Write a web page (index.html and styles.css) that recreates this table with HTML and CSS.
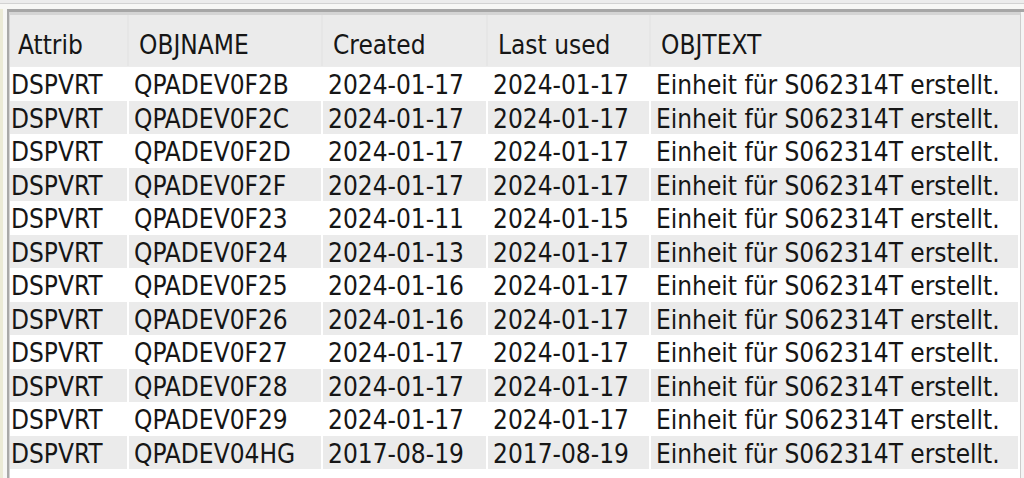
FILE: index.html
```html
<!DOCTYPE html>
<html>
<head>
  <meta charset="utf-8">
  <link rel="stylesheet" href="styles.css">
</head>
<body>
  <div class="top-strip"></div>
  <div class="main">
    <div class="side"></div>
    <div class="panel">
      <div class="list">
        <div class="row header">
          <div class="cell">Attrib</div>
          <div class="cell">OBJNAME</div>
          <div class="cell">Created</div>
          <div class="cell">Last used</div>
          <div class="cell">OBJTEXT</div>
        </div>

        <div class="row">
          <div class="cell">DSPVRT</div><div class="cell">QPADEV0F2B</div><div class="cell">2024-01-17</div><div class="cell">2024-01-17</div><div class="cell">Einheit für S062314T erstellt.</div>
        </div>
        <div class="row">
          <div class="cell">DSPVRT</div><div class="cell">QPADEV0F2C</div><div class="cell">2024-01-17</div><div class="cell">2024-01-17</div><div class="cell">Einheit für S062314T erstellt.</div>
        </div>
        <div class="row">
          <div class="cell">DSPVRT</div><div class="cell">QPADEV0F2D</div><div class="cell">2024-01-17</div><div class="cell">2024-01-17</div><div class="cell">Einheit für S062314T erstellt.</div>
        </div>
        <div class="row">
          <div class="cell">DSPVRT</div><div class="cell">QPADEV0F2F</div><div class="cell">2024-01-17</div><div class="cell">2024-01-17</div><div class="cell">Einheit für S062314T erstellt.</div>
        </div>
        <div class="row">
          <div class="cell">DSPVRT</div><div class="cell">QPADEV0F23</div><div class="cell">2024-01-11</div><div class="cell">2024-01-15</div><div class="cell">Einheit für S062314T erstellt.</div>
        </div>
        <div class="row">
          <div class="cell">DSPVRT</div><div class="cell">QPADEV0F24</div><div class="cell">2024-01-13</div><div class="cell">2024-01-17</div><div class="cell">Einheit für S062314T erstellt.</div>
        </div>
        <div class="row">
          <div class="cell">DSPVRT</div><div class="cell">QPADEV0F25</div><div class="cell">2024-01-16</div><div class="cell">2024-01-17</div><div class="cell">Einheit für S062314T erstellt.</div>
        </div>
        <div class="row">
          <div class="cell">DSPVRT</div><div class="cell">QPADEV0F26</div><div class="cell">2024-01-16</div><div class="cell">2024-01-17</div><div class="cell">Einheit für S062314T erstellt.</div>
        </div>
        <div class="row">
          <div class="cell">DSPVRT</div><div class="cell">QPADEV0F27</div><div class="cell">2024-01-17</div><div class="cell">2024-01-17</div><div class="cell">Einheit für S062314T erstellt.</div>
        </div>
        <div class="row">
          <div class="cell">DSPVRT</div><div class="cell">QPADEV0F28</div><div class="cell">2024-01-17</div><div class="cell">2024-01-17</div><div class="cell">Einheit für S062314T erstellt.</div>
        </div>
        <div class="row">
          <div class="cell">DSPVRT</div><div class="cell">QPADEV0F29</div><div class="cell">2024-01-17</div><div class="cell">2024-01-17</div><div class="cell">Einheit für S062314T erstellt.</div>
        </div>
        <div class="row">
          <div class="cell">DSPVRT</div><div class="cell">QPADEV04HG</div><div class="cell">2017-08-19</div><div class="cell">2017-08-19</div><div class="cell">Einheit für S062314T erstellt.</div>
        </div>
      </div>
    </div>
  </div>
</body>
</html>
```

FILE: styles.css
```css
* {
  margin: 0;
  padding: 0;
  box-sizing: border-box;
}

body {
  width: 1024px;
  height: 478px;
  overflow: hidden;
  background: #f7f7f5;
  font-family: 'DejaVu Sans Condensed', 'DejaVu Sans', sans-serif;
  font-size: 26px;
  color: #161616;
}

.top-strip {
  height: 4px;
  background: #ececec;
  border-bottom: 1px solid #d2d2d2;
}

.main {
  display: flex;
  margin-top: 5px;
  height: 469px;
}

.side {
  width: 3px;
  background: #ebead6;
}

.panel {
  flex: 1;
  margin-left: 4px;
  border-top: 3px solid #a6a6a6;
  border-left: 2px solid #a9a9a9;
  background: #f4f4f4;
}

.list {
  height: 100%;
  margin-right: 3px;
  background: #ffffff;
  border-top: 3px solid #d4d4d4;
  border-left: 1px solid #d4d4d4;
  border-right: 1px solid #cccccc;
}

.row {
  display: grid;
  grid-template-columns: 119px 194px 165px 163px 1fr;
  height: 33.5px;
  align-items: stretch;
}

.row:nth-child(odd) .cell {
  background: #ebebeb;
}

.cell {
  display: flex;
  align-items: center;
  padding-left: 5px;
  padding-top: 3px;
  white-space: nowrap;
  overflow: hidden;
  border-right: 2px solid #ffffff;
}

.row .cell:first-child {
  padding-left: 1px;
}

.header {
  height: 52px;
  border-bottom: 1px solid #ececec;
}

.header .cell {
  padding-left: 10px;
  padding-top: 8px;
  border-right: 2px solid #e6e6e6;
}

.header .cell:first-child {
  padding-left: 8px;
}

.header .cell:last-child {
  border-right: none;
}
```
